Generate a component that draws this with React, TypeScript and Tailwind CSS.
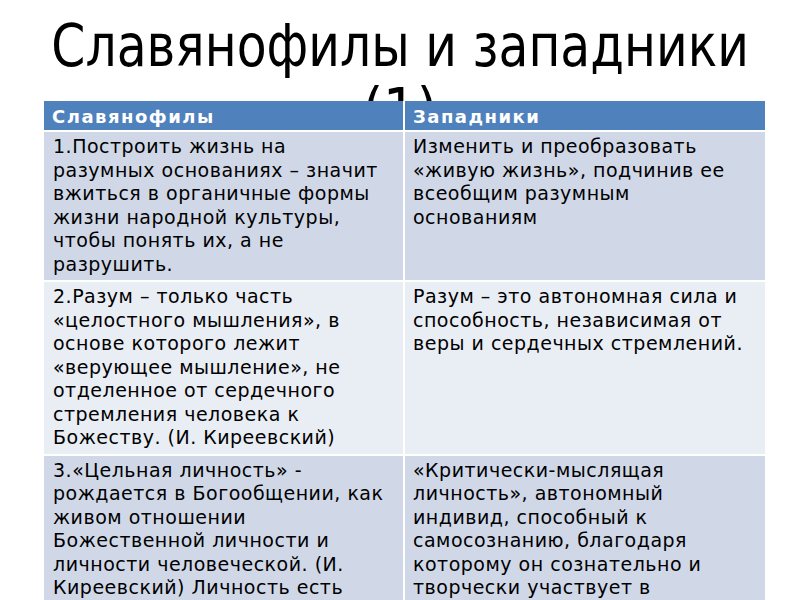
const rows = [
  {
    left: [
      '1.Построить жизнь на',
      'разумных основаниях – значит',
      'вжиться в органичные формы',
      'жизни народной культуры,',
      'чтобы понять их, а не',
      'разрушить.',
    ],
    right: ['Изменить и преобразовать', '«живую жизнь», подчинив ее', 'всеобщим разумным', 'основаниям'],
    bg: 'bg-[#d0d8e8]',
  },
  {
    left: [
      '2.Разум – только часть',
      '«целостного мышления», в',
      'основе которого лежит',
      '«верующее мышление», не',
      'отделенное от сердечного',
      'стремления человека к',
      'Божеству. (И. Киреевский)',
    ],
    right: ['Разум – это автономная сила и', 'способность, независимая от', 'веры и сердечных стремлений.'],
    bg: 'bg-[#e9edf4]',
  },
  {
    left: [
      '3.«Цельная личность» -',
      'рождается в Богообщении, как',
      'живом отношении',
      'Божественной личности и',
      'личности человеческой. (И.',
      'Киреевский) Личность есть',
    ],
    right: [
      '«Критически-мыслящая',
      'личность», автономный',
      'индивид, способный к',
      'самосознанию, благодаря',
      'которому он сознательно и',
      'творчески участвует в',
    ],
    bg: 'bg-[#d0d8e8]',
  },
]

function Lines({ lines }: { lines: string[] }) {
  return (
    <>
      {lines.map((l, i) => (
        <div key={i} className="whitespace-nowrap">
          {l}
        </div>
      ))}
    </>
  )
}

export default function App() {
  return (
    <div className="h-[600px] w-[800px] overflow-hidden bg-white font-['DejaVu_Sans',sans-serif] text-black">
      <div className="h-[101px] overflow-hidden pt-[14px] text-center text-[59px] leading-[64px] [font-stretch:condensed]">
        <div className="inline-block scale-x-[0.92] whitespace-nowrap">Славянофилы и западники</div>
        <div>(1)</div>
      </div>

      <div className="ml-[44px] w-[721px]">
        <div className="grid grid-cols-[359px_1fr] bg-[#4f81bd] text-[18px] font-bold tracking-[1.5px] text-white">
          <div className="h-[29px] px-[8px] pt-[2px]">Славянофилы</div>
          <div className="h-[29px] border-l-2 border-white px-[8px] pt-[2px]">Западники</div>
        </div>
        {rows.map((r, i) => (
          <div key={i} className={`mt-[2px] grid grid-cols-[359px_1fr] ${r.bg}`}>
            <div className="px-[9px] pb-[4px] pt-[3px] text-[19px] leading-[23.5px] tracking-[0.5px]">
              <Lines lines={r.left} />
            </div>
            <div className="border-l-2 border-white px-[8px] pb-[4px] pt-[3px] text-[19px] leading-[23.5px] tracking-[0.5px]">
              <Lines lines={r.right} />
            </div>
          </div>
        ))}
      </div>
    </div>
  )
}
